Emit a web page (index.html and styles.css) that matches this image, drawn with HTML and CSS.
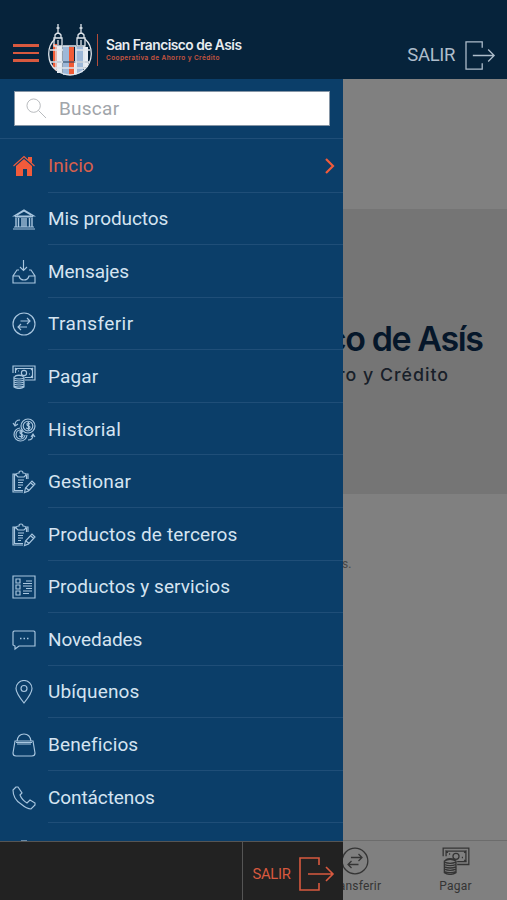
FILE: index.html
```html
<!DOCTYPE html>
<html lang="es">
<head>
<meta charset="utf-8">
<title>San Francisco de Asís</title>
<link rel="stylesheet" href="styles.css">
</head>
<body>
<svg class="defs" aria-hidden="true">
  <symbol id="exit" viewBox="0 0 36 34"><path d="M20 8V1H1v32h19v-7M9 17h25M27 10l7 7-7 7"/></symbol>
  <symbol id="transfer" viewBox="0 0 24 24"><circle cx="12" cy="12" r="11"/><path d="M8.500 9H18M15 6l3 3-3 3M15 15H6M9 12l-3 3 3 3"/></symbol>
  <symbol id="pay" viewBox="0 0 24 24"><path d="M1 8V1h22v14H13M3.500 8V3.500h17v9H13M3 3l2 2M21 3l-2 2M21 13l-2-2M6 6h1M17 9h1"/><circle cx="12" cy="8" r="2.600"/><path d="M2 12q5-3 10 0v10q-5 3-10 0zM2 13q5 2 10 0M2 15q5 2 10 0M2 17q5 2 10 0M2 19q5 2 10 0M2 21q5 2 10 0M3 11q4-2 8 0"/></symbol>
  <symbol id="manage" viewBox="0 0 24 24"><path d="M5 4H1v18h10M4 5H2.500v15.500H11M13 4h3v5M13 5.500h1.500V9M4 5q0-2 3-2 0-2 2-2t2 2q3 0 3 2l-2 2H6zM6 10h6M6 12.500h5M6 15h5M6 17.500h3M12.500 22.500l1-4.500 6.500-7 3 3-6.500 7zM14 18l3 2.500M18.500 12.500l3 3"/></symbol>
</svg>
<div class="app">
  <header class="top">
    <div class="burger"><i></i><i></i><i></i></div>
    <svg class="church" viewBox="0 0 44 52">
      <circle cx="22" cy="30" r="21" fill="#07243c"/>
      <path d="M5 20h4v27H8q-3-3-3-5zM21 23h5v28h-5z" fill="#f15b35"/>
      <path d="M15 22h6v29h-6zM27 23h8v25l-8 3z" fill="#9db8d8"/>
      <path d="M9 22h5v27H9zM26 37h3v13h-3zM35 23h5v20h-5z" fill="#e9eef4"/>
      <path d="M2 38h40" stroke="#21405f"/>
      <g fill="none" stroke="#dfe5eb" stroke-width="1.300"><path d="M7 15C-2 23-1 39 8 46q14 10 28 0c9-8 10-23 1-31M15 22h13M2 26h13M28 26h14M2 38h13M28 38h14M6 44h32M8 22v24M14 22v28M28 22v28M36 22v23"/><path d="M6 22v-8h8v8zM29 22v-8h8v8zM7 14v-3q3-4 6 0v3M30 14v-3q3-4 6 0v3M10 0v10M8.500 4h3M33 0v10M31.500 4h3M10 16v5M33 16v5"/></g>
    </svg>
    <div class="brand"><b>San Francisco de Asís</b><span>Cooperativa de Ahorro y Crédito</span></div>
    <div class="logout"><span>SALIR</span><svg><use href="#exit"/></svg></div>
  </header>

  <nav class="drawer">
    <div class="search"><div class="field"><svg viewBox="0 0 22 22"><circle cx="8" cy="8" r="7"/><path d="M13 13l8 8"/></svg><span>Buscar</span></div></div>
    <ul class="menu">
      <li class="active"><svg viewBox="0 0 24 24"><path fill="currentColor" stroke="none" d="M4 12l8-7 8 7v10h-5v-7h-4v7H4zM16 3h4v6l-4-3z"/><path d="M1.500 12L12 2.500 22.500 12"/></svg><span>Inicio</span><svg class="chevron" viewBox="0 0 11 18"><path d="M2 2l7 7-7 7"/></svg></li>
      <li><svg viewBox="0 0 24 24"><path d="M2 9l10-6 10 6zM5 8l7-4 7 4M1 22h22M2 20h20M3 10h18"/><path d="M4 11v9M6.500 11v9M10 11v9M12 11v9M14 11v9M17.500 11v9M20 11v9" stroke-width="1.400"/></svg><span class="tight">Mis productos</span></li>
      <li><svg viewBox="0 0 24 24"><path d="M11.500 0v10M8 7l3.500 3.500L15 7M7 10H5l-4 6v7h22v-7l-4-6h-2M1 16h6q1 4 5 4t5-4h6"/></svg><span class="tight">Mensajes</span></li>
      <li><svg><use href="#transfer"/></svg><span class="widest">Transferir</span></li>
      <li><svg><use href="#pay"/></svg><span class="wide">Pagar</span></li>
      <li><svg viewBox="0 0 24 24"><circle cx="16" cy="8" r="7"/><circle cx="16" cy="8" r="4.800"/><path d="M8 10a6.500 6.500 0 1 0 7 7M9 12a4.500 4.500 0 1 0 4 5M18 6q-3-2-3 0t2 2q2 1 0 3l-3-1M16.500 4v8M11 14q-3-2-3 0t2 2q2 1 0 3l-3-1M9.500 12v8M8 2Q3 2 3 7M1 5l2 3 3-2M16 22q5 0 5-5M19 19l2-3 2 3"/></svg><span class="wider">Historial</span></li>
      <li><svg><use href="#manage"/></svg><span class="wide">Gestionar</span></li>
      <li><svg><use href="#manage"/></svg><span class="wide">Productos de terceros</span></li>
      <li><svg viewBox="0 0 24 24"><path d="M1 1h22v22H1zM4 4h4v4H4zM4 10h4v4H4zM4 16h4v4H4zM14 6h6M11 8.500h9M11 11h9M14 13.500h6M11 16h9M11 18.500h6"/></svg><span class="slight">Productos y servicios</span></li>
      <li><svg viewBox="0 0 24 24"><path d="M2 3h20l1 1v14H7l-4 3v-3l-2-1V4z"/><path d="M8 10.500h1.500M11.500 10.500H13M15 10.500h1.500" stroke-width="1.600"/></svg><span class="tight">Novedades</span></li>
      <li><svg viewBox="0 0 24 24"><path d="M12 23Q4 13 4 8.500a8 8 0 0 1 16 0Q20 13 12 23z"/><circle cx="12" cy="8.500" r="3"/></svg><span class="wide">Ubíquenos</span></li>
      <li><svg viewBox="0 0 24 24"><path d="M3 8h18l2 12q0 3-3 3H4q-3 0-3-3zM5 8q1-7 7-7t7 7M4 9.500h16M5 11h14"/></svg><span class="wide">Beneficios</span></li>
      <li><svg viewBox="0 0 24 24"><path d="M4 1L1 4q0 9 8 14 6 5 10 5l4-4v-2l-5-3-3 3q-5-3-7-8l2-2-4-6z"/></svg><span class="tight">Contáctenos</span></li>
    </ul>
    <div class="peek"><i></i></div>
    <div class="drawer-foot"><div class="leave"><span>SALIR</span><svg><use href="#exit"/></svg></div></div>
  </nav>

  <main class="page">
    <section class="banner"><div class="title">San Francisco de Asís</div><div class="sub">Cooperativa de Ahorro y Crédito</div></section>
    <p class="note">s.</p>
    <footer class="tabs">
      <div class="tab first"><svg><use href="#transfer"/></svg><span>Transferir</span></div>
      <div class="tab"><svg><use href="#pay"/></svg><span>Pagar</span></div>
    </footer>
  </main>
</div>
</body>
</html>
```
FILE: styles.css
```css
* { box-sizing: border-box; }
body { margin: 0; font-family: Roboto, "Liberation Sans", sans-serif; }
svg { fill: none; stroke: currentColor; stroke-width: 1; flex: none; }
.defs { display: none; }
.app { width: 507px; height: 900px; overflow: hidden; display: grid; grid-template: 79px 821px / 343px 164px; background: #808080; }

.top { grid-column: 1 / 3; background: #06233b; display: flex; }
.burger { width: 26px; margin: 44px 0 0 12.500px; display: flex; flex-direction: column; gap: 5px; }
.burger i { height: 2.500px; background: #d8593f; }
.church { width: 44px; height: 52px; margin: 24px 0 0 9px; stroke: none; }
.brand { height: 32px; margin: 34px 0 0 5.500px; padding-left: 8px; border-left: 1px solid #b44b38; color: #e8ecf0; white-space: nowrap; display: flex; flex-direction: column; }
.brand b { font: 600 13.800px/15px Inter, sans-serif; letter-spacing: -.52px; margin-top: 4px; }
.brand span { font: 600 6.500px/9px Inter, sans-serif; color: #c9553f; letter-spacing: .4px; margin-top: 1px; }
.logout { margin: 40px 11px 0 auto; height: 30px; display: flex; align-items: center; gap: 10px; color: #aebdcb; font-size: 18.500px; letter-spacing: -.35px; }
.logout svg { width: 31px; height: 29px; stroke-width: 1.500; }

.drawer { background: #0b3e69; overflow: hidden; display: flex; flex-direction: column; color: #d5e4f1; }
.search { height: 60px; padding: 12px 13px 0 14px; border-bottom: 1px solid #1f4e78; flex: none; }
.field { height: 35px; background: #fff; border: 1px solid #8595a5; color: #a1a5aa; font-size: 19px; letter-spacing: .25px; display: flex; align-items: center; padding-left: 11px; gap: 12px; }
.field svg { width: 21px; height: 21px; color: #b5b8bb; }
.menu { list-style: none; margin: 0; padding: 0; }
.menu li { height: 52.580px; display: grid; grid-template-columns: 24px 1fr auto; column-gap: 12px; padding: 1px 0 0 12px; align-items: center; font-size: 19px; line-height: 24px; background: linear-gradient(#1f4e78, #1f4e78) 48px 100% / 295px 1px no-repeat; }
.menu li > svg:first-child { width: 24px; height: 24px; color: #a9c6df; stroke-width: 1.150; }
.menu li.active { height: 53.500px; }
.menu li.active, .menu li.active > svg:first-child { color: #f15b3b; }
.menu li.active span { color: #d8604d; }
.menu li.active .chevron { width: 11px; height: 18px; margin-right: 8px; stroke-width: 2.200; }
.menu span { white-space: nowrap; }
.menu .tight { letter-spacing: -.08px; }
.menu .slight { letter-spacing: .06px; }
.menu .wide { letter-spacing: .14px; }
.menu .wider { letter-spacing: .24px; }
.menu .widest { letter-spacing: .42px; }
.peek { flex: 1; display: flex; align-items: flex-end; padding-left: 21px; }
.peek i { width: 6px; height: 1px; background: #688aa7; }
.drawer-foot { height: 59px; flex: none; background: #222; border-top: 1px solid #555; display: flex; justify-content: flex-end; }
.leave { width: 101px; border-left: 1px solid #555; display: flex; align-items: center; gap: 8px; padding: 5px 0 0 9.500px; color: #d8593f; font-size: 14.800px; letter-spacing: -.3px; }
.leave svg { width: 36px; height: 34px; stroke-width: 1.600; }

.page { overflow: hidden; display: flex; flex-direction: column; }
.banner { height: 285px; margin-top: 130px; background: #757575; color: #06172a; white-space: nowrap; display: flex; flex-direction: column; align-items: flex-end; flex: none; }
.title { font: 600 34px/42px Inter, sans-serif; letter-spacing: -1.400px; margin: 109px 24.500px 0 0; }
.sub { font: 500 17.800px/24px Inter, sans-serif; letter-spacing: 1px; margin: 3px 58px 0 0; color: #182029; }
.note { margin: 63px 0 0 -1px; font-size: 12px; line-height: 14px; color: #484848; }
.tabs { margin-top: auto; height: 60px; border-top: 1px solid #6c6c6c; display: flex; color: #343434; font-size: 12px; flex: none; }
.tab { width: 101px; height: 59px; display: flex; flex-direction: column; align-items: center; padding-top: 6px; line-height: 16px; flex: none; letter-spacing: .2px; }
.tab svg { width: 28px; height: 28px; margin-bottom: 3px; stroke-width: 1.100; }
.tab.first { margin-left: -39px; }
```
